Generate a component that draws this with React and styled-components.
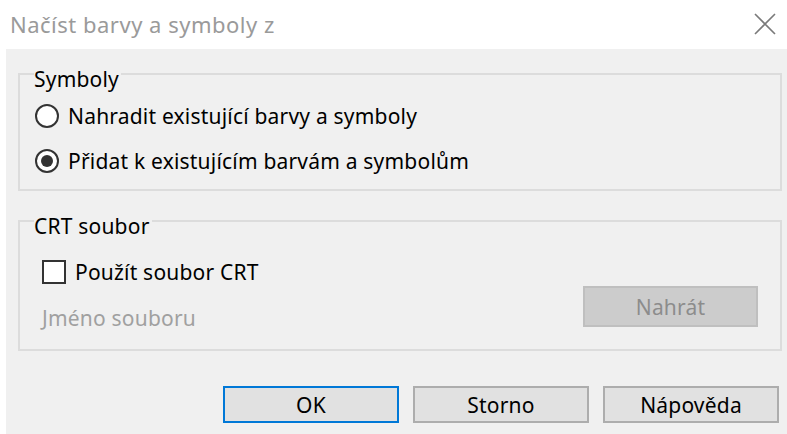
import React from 'react';
import styled, {createGlobalStyle} from 'styled-components';

const GlobalStyle = createGlobalStyle`
    html, body {
        margin: 0;
        padding: 0;
        background: #ffffff;
    }
    body {
        font-family: "Noto Sans", "Open Sans", "DejaVu Sans", sans-serif;
        font-size: 21px;
        letter-spacing: 0.2px;
        color: #000000;
    }
`;

const App = () => {
    return (
        <Window>
            <GlobalStyle/>
            <TitleBar>
                <Title>Načíst barvy a symboly z</Title>
                <Close aria-label="Zavřít">
                    <svg width="22" height="22" viewBox="0 0 22 22">
                        <path d="M1 1 L21 21 M21 1 L1 21" stroke="#7a7a7a" strokeWidth="1.6" fill="none"/>
                    </svg>
                </Close>
            </TitleBar>
            <Body>
                <Group>
                    <Legend>Symboly</Legend>
                    <RadioList>
                        <Option>
                            <Radio/>
                            <span>Nahradit existující barvy a symboly</span>
                        </Option>
                        <Option>
                            <Radio checked/>
                            <span>Přidat k existujícím barvám a symbolům</span>
                        </Option>
                    </RadioList>
                </Group>
                <Group $gap={15}>
                    <Legend>CRT soubor</Legend>
                    <CrtRow>
                        <CrtColumn>
                            <Option>
                                <Checkbox/>
                                <span>Použít soubor CRT</span>
                            </Option>
                            <Muted>Jméno souboru</Muted>
                        </CrtColumn>
                        <LoadButton disabled>Nahrát</LoadButton>
                    </CrtRow>
                </Group>
                <Actions>
                    <Button $primary>OK</Button>
                    <Button>Storno</Button>
                    <Button>Nápověda</Button>
                </Actions>
            </Body>
        </Window>
    );
};

export default App;

const Window = styled.div`
    width: 787px;
    height: 434px;
    display: flex;
    flex-direction: column;
    overflow: hidden;
    background: #ffffff;
`;

const TitleBar = styled.div`
    height: 49px;
    display: flex;
    align-items: center;
    justify-content: space-between;
    padding: 0 11px 2px 10px;
    box-sizing: border-box;
`;

const Title = styled.span`
    color: #9a9a9a;
    font-size: 22px;
    letter-spacing: 0.5px;
    line-height: 24px;
`;

const Close = styled.div`
    width: 22px;
    height: 22px;
    svg {
        display: block;
    }
`;

const Body = styled.div`
    flex: 1;
    margin-left: 6px;
    background: #f0f0f0;
    padding: 10px 5px 0 12px;
    display: flex;
    flex-direction: column;
`;

const Group = styled.fieldset`
    margin: ${p => p.$gap || 0}px 0 0 0;
    padding: 0 0 0 15px;
    border: 2px solid #dcdcdc;
    min-inline-size: 0;
`;

const Legend = styled.legend`
    padding: 10px 2px 0 0;
    margin-left: -1px;
    line-height: 20px;
    font-size: 21px;
`;

const RadioList = styled.div`
    display: flex;
    flex-direction: column;
    gap: 15px;
    padding: 12px 0 13px 0;
`;

const Option = styled.label`
    display: flex;
    align-items: center;
    gap: 9px;
    height: 30px;
    line-height: 30px;
`;

const Radio = styled.span`
    width: 24px;
    height: 24px;
    box-sizing: border-box;
    border: 2px solid #333333;
    border-radius: 50%;
    background: #ffffff;
    display: flex;
    align-items: center;
    justify-content: center;
    &::after {
        content: '';
        width: 12px;
        height: 12px;
        border-radius: 50%;
        background: ${p => p.checked ? '#333333' : 'transparent'};
    }
`;

const Checkbox = styled.span`
    width: 24px;
    height: 24px;
    margin-left: 7px;
    box-sizing: border-box;
    border: 2px solid #333333;
    background: #ffffff;
`;

const CrtRow = styled.div`
    display: flex;
    justify-content: space-between;
    align-items: flex-end;
    padding: 0 22px 0 0;
`;

const CrtColumn = styled.div`
    display: flex;
    flex-direction: column;
    gap: 21px;
    padding: 21px 0 21px 0;
`;

const Muted = styled.span`
    color: #a0a0a0;
    line-height: 20px;
    padding-left: 7px;
`;

const ButtonBase = styled.button`
    font-family: "Noto Sans", "Open Sans", sans-serif;
    font-size: 21px;
    letter-spacing: 0.2px;
    box-sizing: border-box;
    padding: 0;
`;

const LoadButton = styled(ButtonBase)`
    width: 175px;
    height: 41px;
    margin-bottom: 22px;
    background: #cccccc;
    border: 2px solid #bfbfbf;
    color: #8c8c8c;
`;

const Actions = styled.div`
    display: flex;
    justify-content: flex-end;
    gap: 14px;
    margin: 35px 3px 0 0;
`;

const Button = styled(ButtonBase)`
    width: 176px;
    height: 37px;
    background: #e1e1e1;
    color: #000000;
    border: 2px solid ${p => p.$primary ? '#0078d7' : '#adadad'};
`;
